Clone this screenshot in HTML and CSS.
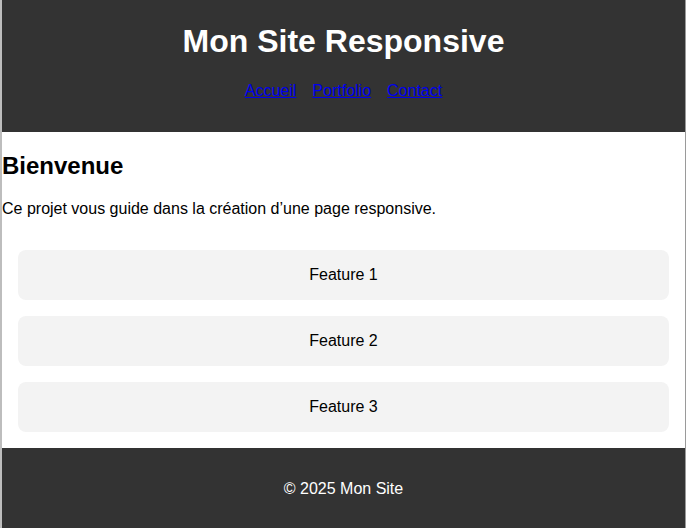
FILE: index.html
```html
<!DOCTYPE html>
<html lang="fr">
<head>
<meta charset="utf-8">
<title>Mon Site Responsive</title>
<link rel="stylesheet" href="styles.css">
</head>
<body>
<div class="page">
  <header class="site-header">
    <h1 class="site-title">Mon Site Responsive</h1>
    <nav class="site-nav">
      <a href="#">Accueil</a>
      <a href="#">Portfolio</a>
      <a href="#">Contact</a>
    </nav>
  </header>
  <main class="content">
    <h2 class="welcome">Bienvenue</h2>
    <p class="intro">Ce projet vous guide dans la création d’une page responsive.</p>
    <section class="features">
      <div class="feature">Feature 1</div>
      <div class="feature">Feature 2</div>
      <div class="feature">Feature 3</div>
    </section>
  </main>
  <footer class="site-footer">
    <p class="copy">© 2025 Mon Site</p>
  </footer>
</div>
</body>
</html>
```
FILE: styles.css
```css
html, body {
  margin: 0;
  padding: 0;
  background: #fff;
}
body {
  font-family: "Liberation Sans", Arial, sans-serif;
  font-size: 16px;
  color: #000;
}
.page {
  border-left: 2px solid #bdbdbd;
  border-right: 1px solid #9a9a9a;
  overflow: hidden;
}
.site-header {
  background: #333;
  color: #fff;
  text-align: center;
  padding: 0 0 32px;
  display: flow-root;
}
.site-title {
  font-size: 32px;
  margin: 23px 0 22px;
  line-height: 37px;
}
.site-nav {
  display: flex;
  justify-content: center;
  gap: 16px;
  line-height: 18px;
}
.site-nav a {
  color: #0000ee;
  text-decoration: underline;
}
.content {
  display: flow-root;
}
.welcome {
  font-size: 24px;
  margin: 20px 0 20px;
  line-height: 28px;
}
.intro {
  margin: 0;
  line-height: 18px;
}
.features {
  display: flex;
  flex-direction: column;
  gap: 16px;
  padding: 16px;
  margin-top: 16px;
}
.feature {
  background: #f3f3f3;
  border-radius: 8px;
  padding: 16px;
  line-height: 18px;
  text-align: center;
}
.site-footer {
  background: #333;
  color: #fff;
  text-align: center;
  padding: 16px;
  display: flow-root;
}
.copy {
  margin: 16px 0;
  line-height: 18px;
}
```
